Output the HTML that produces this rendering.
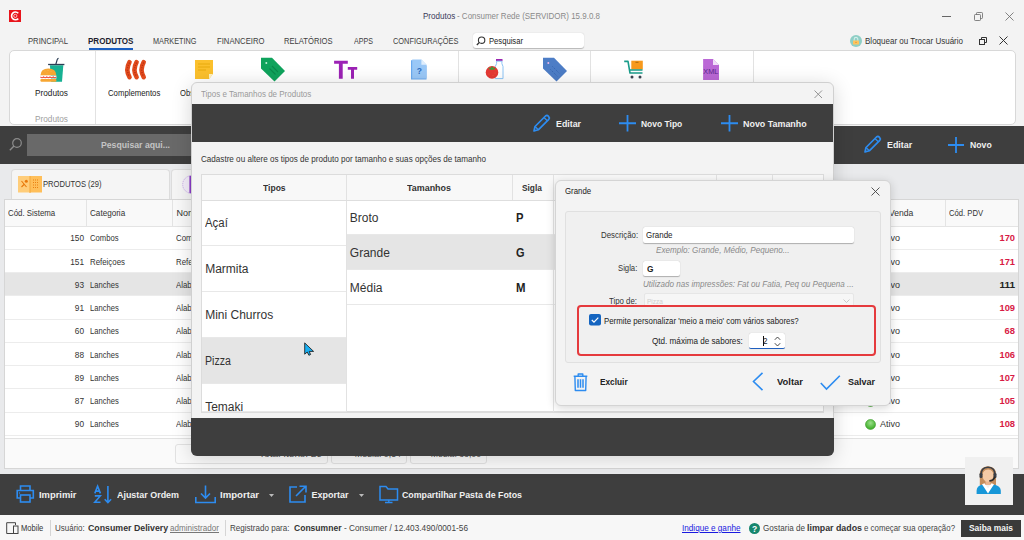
<!DOCTYPE html>
<html><head><meta charset="utf-8"><title>Produtos</title>
<style>
html,body{margin:0;padding:0;}
body{width:1024px;height:540px;overflow:hidden;position:relative;background:#f3f3f3;font-family:"Liberation Sans", sans-serif;}
svg{overflow:visible}
</style></head><body>
<div style="position:absolute;left:0px;top:0px;width:1024px;height:540px;background:#f3f3f3"></div>
<svg style="position:absolute;left:9px;top:9.8px;" width="12" height="12" viewBox="0 0 12 12"><rect width="12" height="12" fill="#e8141b"/><path d="M9.3 3.2A3.9 3.9 0 1 0 9.3 8.6" fill="none" stroke="#fff" stroke-width="1.6"/><circle cx="6.3" cy="5.9" r="1.6" fill="none" stroke="#ffc8c8" stroke-width="0.9"/></svg>
<div style="position:absolute;top:10.75px;font-size:9px;line-height:10.35px;font-weight:400;color:#3a3a5a;white-space:pre;left:422.60px;transform-origin:0 0;transform:scaleX(0.8937);">Produtos</div>
<div style="position:absolute;top:10.75px;font-size:9px;line-height:10.35px;font-weight:400;color:#8a8a8a;white-space:pre;left:457.00px;transform-origin:0 0;transform:scaleX(0.8860);">- Consumer Rede (SERVIDOR) 15.9.0.8</div>
<div style="position:absolute;left:942px;top:16px;width:9px;height:0.8px;background:#666"></div>
<svg style="position:absolute;left:974px;top:12px;" width="9" height="9" viewBox="0 0 9 9"><rect x="0.5" y="2.5" width="6" height="6" rx="0.8" fill="none" stroke="#666" stroke-width="0.8"/><path d="M2.5 2.5V1.3Q2.5 0.5 3.3 0.5H7.7Q8.5 0.5 8.5 1.3V5.7Q8.5 6.5 7.7 6.5H6.5" fill="none" stroke="#666" stroke-width="0.8"/></svg>
<svg style="position:absolute;left:1005px;top:12px;" width="9" height="9" viewBox="0 0 9 9"><path d="M0.5 0.5L8.5 8.5M8.5 0.5L0.5 8.5" stroke="#666" stroke-width="0.8"/></svg>
<div style="position:absolute;top:35.55px;font-size:9px;line-height:10.35px;font-weight:400;color:#404040;white-space:pre;left:27.50px;transform-origin:0 0;transform:scaleX(0.8536);">PRINCIPAL</div>
<div style="position:absolute;top:35.55px;font-size:9px;line-height:10.35px;font-weight:700;color:#1e1e2e;white-space:pre;left:88.00px;transform-origin:0 0;transform:scaleX(0.8949);">PRODUTOS</div>
<div style="position:absolute;left:88.5px;top:48px;width:44.5px;height:2px;background:#1b5fc1"></div>
<div style="position:absolute;top:35.55px;font-size:9px;line-height:10.35px;font-weight:400;color:#404040;white-space:pre;left:152.50px;transform-origin:0 0;transform:scaleX(0.8128);">MARKETING</div>
<div style="position:absolute;top:35.55px;font-size:9px;line-height:10.35px;font-weight:400;color:#404040;white-space:pre;left:216.50px;transform-origin:0 0;transform:scaleX(0.8556);">FINANCEIRO</div>
<div style="position:absolute;top:35.55px;font-size:9px;line-height:10.35px;font-weight:400;color:#404040;white-space:pre;left:284.00px;transform-origin:0 0;transform:scaleX(0.8455);">RELATÓRIOS</div>
<div style="position:absolute;top:35.55px;font-size:9px;line-height:10.35px;font-weight:400;color:#404040;white-space:pre;left:353.50px;transform-origin:0 0;transform:scaleX(0.7912);">APPS</div>
<div style="position:absolute;top:35.55px;font-size:9px;line-height:10.35px;font-weight:400;color:#404040;white-space:pre;left:392.50px;transform-origin:0 0;transform:scaleX(0.8237);">CONFIGURAÇÕES</div>
<div style="position:absolute;left:472.5px;top:32.5px;width:111px;height:15px;background:#fff;border-radius:3px;box-shadow:0 0.5px 1px rgba(0,0,0,0.25)"></div>
<svg style="position:absolute;left:476px;top:35.5px;" width="10" height="10" viewBox="0 0 10 10"><circle cx="5.6" cy="4.2" r="3.2" fill="none" stroke="#333" stroke-width="1.1"/><path d="M3.3 6.5L0.8 9" stroke="#333" stroke-width="1.2"/></svg>
<div style="position:absolute;top:35.55px;font-size:9px;line-height:10.35px;font-weight:400;color:#222;white-space:pre;left:489.00px;transform-origin:0 0;transform:scaleX(0.8493);">Pesquisar</div>
<svg style="position:absolute;left:850px;top:34.5px;" width="12" height="12" viewBox="0 0 12 12"><circle cx="6" cy="6" r="6" fill="#8ecfc6"/><path d="M4.2 5.8V4.2a1.8 1.8 0 0 1 3.6 0V5.8" fill="none" stroke="#d4eeea" stroke-width="1.1"/><rect x="3" y="5.6" width="6" height="3.8" rx="0.5" fill="#ffc45e"/><rect x="5.2" y="6.9" width="1.6" height="0.9" fill="#d8993a"/></svg>
<div style="position:absolute;top:35.55px;font-size:9px;line-height:10.35px;font-weight:400;color:#333;white-space:pre;left:865.00px;transform-origin:0 0;transform:scaleX(0.8904);">Bloquear ou Trocar Usuário</div>
<svg style="position:absolute;left:979px;top:37px;" width="8" height="8" viewBox="0 0 8 8"><rect x="0.5" y="2.5" width="5" height="5" fill="none" stroke="#333" stroke-width="1"/><path d="M2.5 2.5V0.5H7.5V5.5H5.5" fill="none" stroke="#333" stroke-width="1"/></svg>
<svg style="position:absolute;left:999px;top:36px;" width="9" height="9" viewBox="0 0 9 9"><path d="M0.5 0.5L8.5 8.5M8.5 0.5L0.5 8.5" stroke="#333" stroke-width="1"/></svg>
<div style="position:absolute;left:9px;top:50px;width:1007px;height:75px;background:#fff;border:1px solid #d8d8d8;border-radius:5px;box-sizing:border-box"></div>
<div style="position:absolute;left:95px;top:51px;width:1px;height:73px;background:#e2e2e2"></div>
<div style="position:absolute;left:457.5px;top:51px;width:1px;height:32px;background:#e2e2e2"></div>
<div style="position:absolute;left:590px;top:51px;width:1px;height:32px;background:#e2e2e2"></div>
<div style="position:absolute;left:753px;top:51px;width:1px;height:32px;background:#e2e2e2"></div>
<svg style="position:absolute;left:36px;top:54px;" width="34" height="32" viewBox="0 0 34 32">
<path d="M13.9 11.2L15.2 27.8H26L27.3 11.2Z" fill="#17b193"/>
<path d="M12.1 10.5H28.4" stroke="#2c3e55" stroke-width="1.3"/>
<path d="M19.8 10.5L21.2 5.6Q21.6 4.5 22.6 4.4" fill="none" stroke="#2c3e55" stroke-width="1.2"/>
<path d="M4.4 21.6Q4.6 14.5 12.4 14.5Q20.2 14.5 20.4 21.6Z" fill="#f7a632"/>
<rect x="4.4" y="21.6" width="16" height="3" fill="#fff"/>
<path d="M4.4 22.8Q6 24.4 7.6 22.8Q9.2 24.4 10.8 22.8Q12.4 24.4 14 22.8Q15.6 24.4 17.2 22.8Q18.8 24.4 20.4 22.8" stroke="#ee5a4a" stroke-width="1.1" fill="none"/>
<rect x="4.4" y="24.9" width="16" height="2.9" rx="1.2" fill="#f7a632"/>
<g fill="#ffd59a"><circle cx="9" cy="17" r="0.35"/><circle cx="12" cy="16.3" r="0.35"/><circle cx="15" cy="17.5" r="0.35"/><circle cx="11" cy="19" r="0.35"/></g></svg>
<div style="position:absolute;top:87.85px;font-size:9px;line-height:10.35px;font-weight:400;color:#222;white-space:pre;left:35.00px;transform-origin:0 0;transform:scaleX(0.9159);">Produtos</div>
<div style="position:absolute;top:114.25px;font-size:9px;line-height:10.35px;font-weight:400;color:#a0a0a0;white-space:pre;left:35.00px;transform-origin:0 0;transform:scaleX(0.9159);">Produtos</div>
<svg style="position:absolute;left:118.5px;top:54px;" width="34" height="32" viewBox="0 0 34 32">
<g fill="none" stroke="#e04a1c" stroke-width="4.6" stroke-linecap="round">
<path d="M10.5 8.2Q6.2 15.8 10.5 23.2"/><path d="M17.6 8.2Q13.3 15.8 17.6 23.2"/><path d="M24.7 8.2Q20.4 15.8 24.7 23.2"/></g>
<g fill="none" stroke="#b52a10" stroke-width="1.3" stroke-dasharray="0.9 1.6">
<path d="M10.5 8.6Q6.4 15.8 10.5 22.8"/><path d="M17.6 8.6Q13.5 15.8 17.6 22.8"/><path d="M24.7 8.6Q20.6 15.8 24.7 22.8"/></g></svg>
<div style="position:absolute;top:87.85px;font-size:9px;line-height:10.35px;font-weight:400;color:#222;white-space:pre;left:108.40px;transform-origin:0 0;transform:scaleX(0.8640);">Complementos</div>
<svg style="position:absolute;left:195px;top:60px;" width="18" height="19" viewBox="0 0 18 19"><path d="M0 0H18V14L14 19H0Z" fill="#fbc02d"/><path d="M14 19V14H18Z" fill="#fff3c0"/><g stroke="#e0a000" stroke-width="0.7"><path d="M3 4h12M3 7h12M3 10h8"/></g></svg>
<div style="position:absolute;top:87.85px;font-size:9px;line-height:10.35px;font-weight:400;color:#222;white-space:pre;left:179.50px;transform-origin:0 0;transform:scaleX(0.8477);">Obs</div>
<svg style="position:absolute;left:256px;top:54px;" width="34" height="32" viewBox="0 0 34 32"><path d="M5 3.7H16L29 17L18.5 27.5L5 14.5Z" fill="#0fa35c"/><circle cx="10.3" cy="9" r="1" fill="#bff0d6"/><path d="M13.5 14.5L19.5 20.5M16 12L22 18" stroke="#0a8a4c" stroke-width="1.1"/></svg>
<svg style="position:absolute;left:330px;top:54px;" width="34" height="32" viewBox="0 0 34 32"><path d="M4.1 6.8H17.8V9.8H12.7V24.7H8.9V9.8H4.1Z" fill="#9c22b5"/><path d="M17.8 13H27.2V15.7H24V24.7H21V15.7H17.8Z" fill="#9c22b5"/></svg>
<svg style="position:absolute;left:405px;top:54px;" width="34" height="32" viewBox="0 0 34 32"><path d="M6 6.3H16L21.5 11.8V25.6H6Z" fill="#6aaaf0"/><path d="M7.2 5.6H16.4L21.5 10.7V24.6H7.2Z" fill="#9ac8f7"/><path d="M16.4 5.6V10.7H21.5Z" fill="#e0eefc"/><text x="14.3" y="19.5" font-size="8.5" font-family="Liberation Sans" font-weight="700" fill="#2d6cc0" text-anchor="middle">?</text></svg>
<svg style="position:absolute;left:480px;top:54px;" width="34" height="32" viewBox="0 0 34 32"><rect x="16" y="5" width="6.5" height="2.2" fill="#9c27b0"/><path d="M16.6 7.2H21.9V9.6L23 12.5V24.6H15.3V12.5L16.6 9.6Z" fill="#fff" stroke="#8cc4f5" stroke-width="1"/><circle cx="12" cy="18.4" r="6.3" fill="#e53935"/><path d="M8 13.5L10.5 14.3L12 12L13.5 14.3L16 13.5L14 15.8H10Z" fill="#3f9e3a"/><g fill="#f7b24a"><circle cx="9" cy="20" r="0.35"/><circle cx="13" cy="21.5" r="0.35"/><circle cx="15" cy="19" r="0.35"/></g></svg>
<svg style="position:absolute;left:538px;top:54px;" width="34" height="32" viewBox="0 0 34 32"><path d="M5 3.7H16L29 17L18.5 27.5L5 14.5Z" fill="#4d7dc6"/><circle cx="10.3" cy="9" r="1" fill="#f0b8e8"/><path d="M14.5 12.5L21.5 19.5M12.5 15.5L19.5 22.5" stroke="#2a5aa8" stroke-width="0.8" stroke-dasharray="1 1.4"/></svg>
<svg style="position:absolute;left:618px;top:54px;" width="34" height="32" viewBox="0 0 34 32"><rect x="13.3" y="6.7" width="11.5" height="8.8" fill="#f7991c"/><path d="M17.5 8.3H20.5" stroke="#8a5200" stroke-width="0.7"/><path d="M6.2 7.4H10L12 19H24.5" fill="none" stroke="#1a9c8a" stroke-width="1.6" stroke-linejoin="round"/><path d="M11.5 16H24.5" stroke="#1a9c8a" stroke-width="1.5"/><circle cx="14" cy="23" r="1.5" fill="#3b4552"/><circle cx="22" cy="23" r="1.5" fill="#3b4552"/></svg>
<svg style="position:absolute;left:700px;top:54px;" width="34" height="32" viewBox="0 0 34 32"><path d="M3.1 5H13L19 11V25.9H3.1Z" fill="#bb68d6"/><path d="M13 5V11H19Z" fill="#f0def8"/><text x="10.8" y="20" font-size="6.6" font-family="Liberation Sans" fill="#5a2a8a" text-anchor="middle" textLength="15" lengthAdjust="spacingAndGlyphs">XML</text></svg>
<div style="position:absolute;left:0px;top:126px;width:1024px;height:37.5px;background:#3e3e3e"></div>
<svg style="position:absolute;left:8.5px;top:138px;" width="13" height="13" viewBox="0 0 13 13"><circle cx="8" cy="5" r="4.3" fill="none" stroke="#8c8c8c" stroke-width="1.2"/><path d="M5 8L0.8 12.2" stroke="#8c8c8c" stroke-width="1.4"/></svg>
<div style="position:absolute;left:27px;top:134px;width:180px;height:21.5px;background:#696969"></div>
<div style="position:absolute;top:140.05px;font-size:9px;line-height:10.35px;font-weight:700;color:#c4c4c4;white-space:pre;left:101.00px;transform-origin:0 0;transform:scaleX(0.9646);">Pesquisar aqui...</div>
<svg style="position:absolute;left:863px;top:134.5px;" width="19" height="19" viewBox="0 0 19 19"><path d="M2 17L3 12.5L13.5 2Q15 0.8 16.5 2.3Q18 3.8 16.8 5.3L6.3 15.8Z" fill="none" stroke="#2d8cf0" stroke-width="1.7" stroke-linejoin="round"/><path d="M12 3.5L15.3 6.8M3 12.5L6.3 15.8" stroke="#2d8cf0" stroke-width="1.3"/></svg>
<div style="position:absolute;top:140.25px;font-size:9px;line-height:10.35px;font-weight:700;color:#f0f0f0;white-space:pre;left:886.70px;transform-origin:0 0;transform:scaleX(0.9876);">Editar</div>
<svg style="position:absolute;left:948px;top:137px;" width="16" height="16" viewBox="0 0 16 16"><path d="M8 0V16M0 8H16" stroke="#2d8cf0" stroke-width="1.8"/></svg>
<div style="position:absolute;top:140.25px;font-size:9px;line-height:10.35px;font-weight:700;color:#f0f0f0;white-space:pre;left:969.60px;transform-origin:0 0;transform:scaleX(0.9644);">Novo</div>
<div style="position:absolute;left:0px;top:163.5px;width:1024px;height:311px;background:#e9eaec"></div>
<div style="position:absolute;left:11px;top:168.8px;width:159px;height:31.5px;background:#f5f5f5;border:1px solid #dcdcdc;border-bottom:none;border-radius:4px 4px 0 0;box-sizing:border-box"></div>
<div style="position:absolute;left:171px;top:168.8px;width:60px;height:31.5px;background:#f5f5f5;border:1px solid #dcdcdc;border-bottom:none;border-radius:4px 4px 0 0;box-sizing:border-box"></div>
<svg style="position:absolute;left:18px;top:175.5px;" width="24" height="17" viewBox="0 0 24 17"><rect x="0" y="0" width="12" height="16.5" fill="#ffcd7a"/><rect x="12" y="0" width="12" height="16.5" fill="#ffbf5a"/><path d="M3.5 5L8.5 11M3.5 11L6 8.5" stroke="#e8780a" stroke-width="1.1"/><circle cx="8.3" cy="5.3" r="1.5" fill="#e8780a"/><g stroke="#e8780a" stroke-width="0.9" stroke-dasharray="1 1"><path d="M15 4h6M15 6.5h6M15 9h6M15 11.5h6"/></g><rect x="11.5" y="0" width="1" height="17" fill="#f4a83a"/></svg>
<div style="position:absolute;top:179.05px;font-size:9px;line-height:10.35px;font-weight:400;color:#333;white-space:pre;left:43.40px;transform-origin:0 0;transform:scaleX(0.8449);">PRODUTOS (29)</div>
<svg style="position:absolute;left:179.5px;top:175px;" width="24" height="19" viewBox="0 0 24 19"><circle cx="11.5" cy="9.5" r="8.8" fill="#f4eefa" stroke="#c6a8e6" stroke-width="0.9" stroke-dasharray="1.2 0.8"/><path d="M10.5 0.8V18.2" stroke="#8a3cc8" stroke-width="2.2"/></svg>
<div style="position:absolute;left:4px;top:199px;width:1015px;height:270px;background:#fafafa;border:1px solid #d6d6d6;box-sizing:border-box"></div>
<div style="position:absolute;left:5px;top:200px;width:1013px;height:26.6px;background:#f9f9f9;border-bottom:1px solid #e4e4e4;box-sizing:border-box"></div>
<div style="position:absolute;left:86px;top:200px;width:1px;height:26px;background:#e4e4e4"></div>
<div style="position:absolute;left:172px;top:200px;width:1px;height:26px;background:#e4e4e4"></div>
<div style="position:absolute;left:945px;top:200px;width:1px;height:26px;background:#e4e4e4"></div>
<div style="position:absolute;top:208.05px;font-size:9px;line-height:10.35px;font-weight:400;color:#333;white-space:pre;left:7.80px;transform-origin:0 0;transform:scaleX(0.8736);">Cód. Sistema</div>
<div style="position:absolute;top:208.05px;font-size:9px;line-height:10.35px;font-weight:400;color:#333;white-space:pre;left:90.20px;transform-origin:0 0;transform:scaleX(0.9018);">Categoria</div>
<div style="position:absolute;top:208.05px;font-size:9px;line-height:10.35px;font-weight:400;color:#333;white-space:pre;left:176.40px;transform-origin:0 0;">Nome</div>
<div style="position:absolute;top:208.05px;font-size:9px;line-height:10.35px;font-weight:400;color:#333;white-space:pre;left:867.00px;transform-origin:0 0;transform:scaleX(0.9537);">Disp. Venda</div>
<div style="position:absolute;top:208.05px;font-size:9px;line-height:10.35px;font-weight:400;color:#333;white-space:pre;left:948.90px;transform-origin:0 0;transform:scaleX(0.8518);">Cód. PDV</div>
<div style="position:absolute;left:5px;top:226.5px;width:1013px;height:23.3px;background:#ffffff;border-bottom:1px solid #ececec;box-sizing:border-box"></div>
<div style="position:absolute;top:233.35px;font-size:9px;line-height:10.35px;font-weight:400;color:#333;white-space:pre;left:68.57px;transform-origin:100% 0;transform:scaleX(0.9181);">150</div>
<div style="position:absolute;top:233.35px;font-size:9px;line-height:10.35px;font-weight:400;color:#333;white-space:pre;left:89.50px;transform-origin:0 0;transform:scaleX(0.8503);">Combos</div>
<div style="position:absolute;top:233.35px;font-size:9px;line-height:10.35px;font-weight:400;color:#333;white-space:pre;left:176.40px;transform-origin:0 0;transform:scaleX(0.8700);">Combo</div>
<svg style="position:absolute;left:865.3px;top:233.0px;" width="11" height="11" viewBox="0 0 11 11"><defs><radialGradient id="g0" cx="0.5" cy="0.35" r="0.6"><stop offset="0" stop-color="#9be08a"/><stop offset="1" stop-color="#3fae2a"/></radialGradient></defs><circle cx="5.5" cy="5.5" r="5" fill="url(#g0)" stroke="#3a9a2a" stroke-width="0.6"/></svg>
<div style="position:absolute;top:233.35px;font-size:9px;line-height:10.35px;font-weight:400;color:#333;white-space:pre;left:880.00px;transform-origin:0 0;">Ativo</div>
<div style="position:absolute;top:233.35px;font-size:9px;line-height:10.35px;font-weight:700;color:#d81b45;white-space:pre;left:1000.47px;transform-origin:100% 0;transform:scaleX(1.0378);">170</div>
<div style="position:absolute;left:5px;top:249.75px;width:1013px;height:23.3px;background:#ffffff;border-bottom:1px solid #ececec;box-sizing:border-box"></div>
<div style="position:absolute;top:256.60px;font-size:9px;line-height:10.35px;font-weight:400;color:#333;white-space:pre;left:68.57px;transform-origin:100% 0;transform:scaleX(0.9181);">151</div>
<div style="position:absolute;top:256.60px;font-size:9px;line-height:10.35px;font-weight:400;color:#333;white-space:pre;left:89.50px;transform-origin:0 0;transform:scaleX(0.8743);">Refeiçoes</div>
<div style="position:absolute;top:256.60px;font-size:9px;line-height:10.35px;font-weight:400;color:#333;white-space:pre;left:176.40px;transform-origin:0 0;transform:scaleX(0.8700);">Refeição</div>
<svg style="position:absolute;left:865.3px;top:256.25px;" width="11" height="11" viewBox="0 0 11 11"><defs><radialGradient id="g1" cx="0.5" cy="0.35" r="0.6"><stop offset="0" stop-color="#9be08a"/><stop offset="1" stop-color="#3fae2a"/></radialGradient></defs><circle cx="5.5" cy="5.5" r="5" fill="url(#g1)" stroke="#3a9a2a" stroke-width="0.6"/></svg>
<div style="position:absolute;top:256.60px;font-size:9px;line-height:10.35px;font-weight:400;color:#333;white-space:pre;left:880.00px;transform-origin:0 0;">Ativo</div>
<div style="position:absolute;top:256.60px;font-size:9px;line-height:10.35px;font-weight:700;color:#d81b45;white-space:pre;left:1000.47px;transform-origin:100% 0;transform:scaleX(1.0378);">171</div>
<div style="position:absolute;left:5px;top:273.0px;width:1013px;height:23.3px;background:#e5e5e5;border-bottom:1px solid #ececec;box-sizing:border-box"></div>
<div style="position:absolute;top:279.85px;font-size:9px;line-height:10.35px;font-weight:400;color:#333;white-space:pre;left:73.58px;transform-origin:100% 0;transform:scaleX(0.9186);">93</div>
<div style="position:absolute;top:279.85px;font-size:9px;line-height:10.35px;font-weight:400;color:#333;white-space:pre;left:89.50px;transform-origin:0 0;transform:scaleX(0.8463);">Lanches</div>
<div style="position:absolute;top:279.85px;font-size:9px;line-height:10.35px;font-weight:400;color:#333;white-space:pre;left:176.40px;transform-origin:0 0;transform:scaleX(0.8700);">Alabama</div>
<svg style="position:absolute;left:865.3px;top:279.5px;" width="11" height="11" viewBox="0 0 11 11"><defs><radialGradient id="g2" cx="0.5" cy="0.35" r="0.6"><stop offset="0" stop-color="#9be08a"/><stop offset="1" stop-color="#3fae2a"/></radialGradient></defs><circle cx="5.5" cy="5.5" r="5" fill="url(#g2)" stroke="#3a9a2a" stroke-width="0.6"/></svg>
<div style="position:absolute;top:279.85px;font-size:9px;line-height:10.35px;font-weight:400;color:#333;white-space:pre;left:880.00px;transform-origin:0 0;">Ativo</div>
<div style="position:absolute;top:279.85px;font-size:9px;line-height:10.35px;font-weight:700;color:#222;white-space:pre;left:1001.47px;transform-origin:100% 0;transform:scaleX(1.1118);">111</div>
<div style="position:absolute;left:5px;top:296.25px;width:1013px;height:23.3px;background:#ffffff;border-bottom:1px solid #ececec;box-sizing:border-box"></div>
<div style="position:absolute;top:303.10px;font-size:9px;line-height:10.35px;font-weight:400;color:#333;white-space:pre;left:73.58px;transform-origin:100% 0;transform:scaleX(0.9186);">91</div>
<div style="position:absolute;top:303.10px;font-size:9px;line-height:10.35px;font-weight:400;color:#333;white-space:pre;left:89.50px;transform-origin:0 0;transform:scaleX(0.8463);">Lanches</div>
<div style="position:absolute;top:303.10px;font-size:9px;line-height:10.35px;font-weight:400;color:#333;white-space:pre;left:176.40px;transform-origin:0 0;transform:scaleX(0.8700);">Alabama</div>
<svg style="position:absolute;left:865.3px;top:302.75px;" width="11" height="11" viewBox="0 0 11 11"><defs><radialGradient id="g3" cx="0.5" cy="0.35" r="0.6"><stop offset="0" stop-color="#9be08a"/><stop offset="1" stop-color="#3fae2a"/></radialGradient></defs><circle cx="5.5" cy="5.5" r="5" fill="url(#g3)" stroke="#3a9a2a" stroke-width="0.6"/></svg>
<div style="position:absolute;top:303.10px;font-size:9px;line-height:10.35px;font-weight:400;color:#333;white-space:pre;left:880.00px;transform-origin:0 0;">Ativo</div>
<div style="position:absolute;top:303.10px;font-size:9px;line-height:10.35px;font-weight:700;color:#d81b45;white-space:pre;left:1000.47px;transform-origin:100% 0;transform:scaleX(1.0378);">109</div>
<div style="position:absolute;left:5px;top:319.5px;width:1013px;height:23.3px;background:#ffffff;border-bottom:1px solid #ececec;box-sizing:border-box"></div>
<div style="position:absolute;top:326.35px;font-size:9px;line-height:10.35px;font-weight:400;color:#333;white-space:pre;left:73.58px;transform-origin:100% 0;transform:scaleX(0.9186);">60</div>
<div style="position:absolute;top:326.35px;font-size:9px;line-height:10.35px;font-weight:400;color:#333;white-space:pre;left:89.50px;transform-origin:0 0;transform:scaleX(0.8463);">Lanches</div>
<div style="position:absolute;top:326.35px;font-size:9px;line-height:10.35px;font-weight:400;color:#333;white-space:pre;left:176.40px;transform-origin:0 0;transform:scaleX(0.8700);">Alabama</div>
<svg style="position:absolute;left:865.3px;top:326.0px;" width="11" height="11" viewBox="0 0 11 11"><defs><radialGradient id="g4" cx="0.5" cy="0.35" r="0.6"><stop offset="0" stop-color="#9be08a"/><stop offset="1" stop-color="#3fae2a"/></radialGradient></defs><circle cx="5.5" cy="5.5" r="5" fill="url(#g4)" stroke="#3a9a2a" stroke-width="0.6"/></svg>
<div style="position:absolute;top:326.35px;font-size:9px;line-height:10.35px;font-weight:400;color:#333;white-space:pre;left:880.00px;transform-origin:0 0;">Ativo</div>
<div style="position:absolute;top:326.35px;font-size:9px;line-height:10.35px;font-weight:700;color:#d81b45;white-space:pre;left:1005.48px;transform-origin:100% 0;transform:scaleX(1.0384);">68</div>
<div style="position:absolute;left:5px;top:342.75px;width:1013px;height:23.3px;background:#ffffff;border-bottom:1px solid #ececec;box-sizing:border-box"></div>
<div style="position:absolute;top:349.60px;font-size:9px;line-height:10.35px;font-weight:400;color:#333;white-space:pre;left:73.58px;transform-origin:100% 0;transform:scaleX(0.9186);">88</div>
<div style="position:absolute;top:349.60px;font-size:9px;line-height:10.35px;font-weight:400;color:#333;white-space:pre;left:89.50px;transform-origin:0 0;transform:scaleX(0.8463);">Lanches</div>
<div style="position:absolute;top:349.60px;font-size:9px;line-height:10.35px;font-weight:400;color:#333;white-space:pre;left:176.40px;transform-origin:0 0;transform:scaleX(0.8700);">Alabama</div>
<svg style="position:absolute;left:865.3px;top:349.25px;" width="11" height="11" viewBox="0 0 11 11"><defs><radialGradient id="g5" cx="0.5" cy="0.35" r="0.6"><stop offset="0" stop-color="#9be08a"/><stop offset="1" stop-color="#3fae2a"/></radialGradient></defs><circle cx="5.5" cy="5.5" r="5" fill="url(#g5)" stroke="#3a9a2a" stroke-width="0.6"/></svg>
<div style="position:absolute;top:349.60px;font-size:9px;line-height:10.35px;font-weight:400;color:#333;white-space:pre;left:880.00px;transform-origin:0 0;">Ativo</div>
<div style="position:absolute;top:349.60px;font-size:9px;line-height:10.35px;font-weight:700;color:#d81b45;white-space:pre;left:1000.47px;transform-origin:100% 0;transform:scaleX(1.0378);">106</div>
<div style="position:absolute;left:5px;top:366.0px;width:1013px;height:23.3px;background:#ffffff;border-bottom:1px solid #ececec;box-sizing:border-box"></div>
<div style="position:absolute;top:372.85px;font-size:9px;line-height:10.35px;font-weight:400;color:#333;white-space:pre;left:73.58px;transform-origin:100% 0;transform:scaleX(0.9186);">89</div>
<div style="position:absolute;top:372.85px;font-size:9px;line-height:10.35px;font-weight:400;color:#333;white-space:pre;left:89.50px;transform-origin:0 0;transform:scaleX(0.8463);">Lanches</div>
<div style="position:absolute;top:372.85px;font-size:9px;line-height:10.35px;font-weight:400;color:#333;white-space:pre;left:176.40px;transform-origin:0 0;transform:scaleX(0.8700);">Alabama</div>
<svg style="position:absolute;left:865.3px;top:372.5px;" width="11" height="11" viewBox="0 0 11 11"><defs><radialGradient id="g6" cx="0.5" cy="0.35" r="0.6"><stop offset="0" stop-color="#9be08a"/><stop offset="1" stop-color="#3fae2a"/></radialGradient></defs><circle cx="5.5" cy="5.5" r="5" fill="url(#g6)" stroke="#3a9a2a" stroke-width="0.6"/></svg>
<div style="position:absolute;top:372.85px;font-size:9px;line-height:10.35px;font-weight:400;color:#333;white-space:pre;left:880.00px;transform-origin:0 0;">Ativo</div>
<div style="position:absolute;top:372.85px;font-size:9px;line-height:10.35px;font-weight:700;color:#d81b45;white-space:pre;left:1000.47px;transform-origin:100% 0;transform:scaleX(1.0378);">107</div>
<div style="position:absolute;left:5px;top:389.25px;width:1013px;height:23.3px;background:#ffffff;border-bottom:1px solid #ececec;box-sizing:border-box"></div>
<div style="position:absolute;top:396.10px;font-size:9px;line-height:10.35px;font-weight:400;color:#333;white-space:pre;left:73.58px;transform-origin:100% 0;transform:scaleX(0.9186);">87</div>
<div style="position:absolute;top:396.10px;font-size:9px;line-height:10.35px;font-weight:400;color:#333;white-space:pre;left:89.50px;transform-origin:0 0;transform:scaleX(0.8463);">Lanches</div>
<div style="position:absolute;top:396.10px;font-size:9px;line-height:10.35px;font-weight:400;color:#333;white-space:pre;left:176.40px;transform-origin:0 0;transform:scaleX(0.8700);">Alabama</div>
<svg style="position:absolute;left:865.3px;top:395.75px;" width="11" height="11" viewBox="0 0 11 11"><defs><radialGradient id="g7" cx="0.5" cy="0.35" r="0.6"><stop offset="0" stop-color="#9be08a"/><stop offset="1" stop-color="#3fae2a"/></radialGradient></defs><circle cx="5.5" cy="5.5" r="5" fill="url(#g7)" stroke="#3a9a2a" stroke-width="0.6"/></svg>
<div style="position:absolute;top:396.10px;font-size:9px;line-height:10.35px;font-weight:400;color:#333;white-space:pre;left:880.00px;transform-origin:0 0;">Ativo</div>
<div style="position:absolute;top:396.10px;font-size:9px;line-height:10.35px;font-weight:700;color:#d81b45;white-space:pre;left:1000.47px;transform-origin:100% 0;transform:scaleX(1.0378);">105</div>
<div style="position:absolute;left:5px;top:412.5px;width:1013px;height:23.3px;background:#ffffff;border-bottom:1px solid #ececec;box-sizing:border-box"></div>
<div style="position:absolute;top:419.35px;font-size:9px;line-height:10.35px;font-weight:400;color:#333;white-space:pre;left:73.58px;transform-origin:100% 0;transform:scaleX(0.9186);">90</div>
<div style="position:absolute;top:419.35px;font-size:9px;line-height:10.35px;font-weight:400;color:#333;white-space:pre;left:89.50px;transform-origin:0 0;transform:scaleX(0.8463);">Lanches</div>
<div style="position:absolute;top:419.35px;font-size:9px;line-height:10.35px;font-weight:400;color:#333;white-space:pre;left:176.40px;transform-origin:0 0;transform:scaleX(0.8700);">Alabama</div>
<svg style="position:absolute;left:865.3px;top:419.0px;" width="11" height="11" viewBox="0 0 11 11"><defs><radialGradient id="g8" cx="0.5" cy="0.35" r="0.6"><stop offset="0" stop-color="#9be08a"/><stop offset="1" stop-color="#3fae2a"/></radialGradient></defs><circle cx="5.5" cy="5.5" r="5" fill="url(#g8)" stroke="#3a9a2a" stroke-width="0.6"/></svg>
<div style="position:absolute;top:419.35px;font-size:9px;line-height:10.35px;font-weight:400;color:#333;white-space:pre;left:880.00px;transform-origin:0 0;">Ativo</div>
<div style="position:absolute;top:419.35px;font-size:9px;line-height:10.35px;font-weight:700;color:#d81b45;white-space:pre;left:1000.47px;transform-origin:100% 0;transform:scaleX(1.0378);">108</div>
<div style="position:absolute;left:5px;top:435.7px;width:1013px;height:3.3px;background:#fff;border-bottom:1px solid #e2e2e2;box-sizing:border-box"></div>
<div style="position:absolute;left:174.8px;top:444px;width:153.2px;height:19.8px;background:#fafafa;border:1px solid #e2e2e2;border-radius:3px;box-sizing:border-box"></div>
<div style="position:absolute;top:449.35px;font-size:9px;line-height:10.35px;font-weight:400;color:#555;white-space:pre;left:265.95px;transform-origin:100% 0;transform:scaleX(1.1241);">Total Itens: 29</div>
<div style="position:absolute;left:330.7px;top:444px;width:76.30000000000001px;height:19.8px;background:#fafafa;border:1px solid #e2e2e2;border-radius:3px;box-sizing:border-box"></div>
<div style="position:absolute;top:449.35px;font-size:9px;line-height:10.35px;font-weight:400;color:#555;white-space:pre;left:353.97px;transform-origin:100% 0;transform:scaleX(0.9823);">Média: 0,54</div>
<div style="position:absolute;left:410px;top:444px;width:77px;height:19.8px;background:#fafafa;border:1px solid #e2e2e2;border-radius:3px;box-sizing:border-box"></div>
<div style="position:absolute;top:449.35px;font-size:9px;line-height:10.35px;font-weight:400;color:#555;white-space:pre;left:428.95px;transform-origin:100% 0;transform:scaleX(0.9684);">Média: 33,00</div>
<div style="position:absolute;left:965px;top:457px;width:47.5px;height:47.5px;background:#f0f0f0"></div>
<div style="position:absolute;left:0px;top:474px;width:1024px;height:41px;background:#3e3e3e"></div>
<div style="position:absolute;left:965px;top:474px;width:47.5px;height:30.5px;background:#f0f0f0"></div>
<svg style="position:absolute;left:960px;top:452px;" width="60" height="58" viewBox="0 0 60 58"><path d="M19.8 33V22Q19.8 14.5 28 14.5Q36 14.5 36 22V33Z" fill="#c48d5c"/>
<rect x="25.5" y="27" width="5" height="6" fill="#e9b48f"/>
<ellipse cx="28" cy="23.5" rx="5.6" ry="6.3" fill="#f4caa6"/>
<path d="M22.2 22Q23 17.5 28.5 17.2Q33.5 17.5 34.2 22V18Q32.5 14.6 28 14.6Q23.5 14.6 22.2 18Z" fill="#c48d5c"/>
<path d="M16.6 42V38.5Q16.8 33.8 22 32.4L28 38L34 32.4Q40.6 33.8 40.8 38.5V42Z" fill="#1797d8"/>
<path d="M22 32.2L28 41.5L34 32.2L31.5 31.2L28 36.5L24.5 31.2Z" fill="#fff"/>
<path d="M21 24Q20.5 15.2 28 15.2Q35.5 15.2 35 24" fill="none" stroke="#3a3f47" stroke-width="1.6"/>
<rect x="19.5" y="21" width="3" height="5" rx="1.3" fill="#3a3f47"/><rect x="33.5" y="21" width="3" height="5" rx="1.3" fill="#3a3f47"/>
<path d="M34.5 25.5Q33.5 28.5 30 28.8" fill="none" stroke="#2a2a2a" stroke-width="1.8" stroke-linecap="round"/></svg>
<svg style="position:absolute;left:15.5px;top:485px;" width="18.5" height="18" viewBox="0 0 18.5 18"><g fill="none" stroke="#2d8cf0" stroke-width="1.6"><path d="M4.5 5V1H14V5"/><path d="M4.5 13H1.2V5.5H17.3V13H14"/><rect x="4.5" y="10" width="9.5" height="7"/></g><circle cx="3.5" cy="8" r="0.7" fill="#2d8cf0"/></svg>
<div style="position:absolute;top:490.05px;font-size:9px;line-height:10.35px;font-weight:700;color:#f0f0f0;white-space:pre;left:39.00px;transform-origin:0 0;transform:scaleX(1.0412);">Imprimir</div>
<svg style="position:absolute;left:94px;top:485px;" width="18" height="19" viewBox="0 0 18 19"><g fill="none" stroke="#2d8cf0" stroke-width="1.6"><path d="M0.8 8.4L3.6 1.2L6.4 8.4M1.7 6.1H5.5"/><path d="M0.8 10.9H6.3L0.8 17.3H6.5"/><path d="M13.9 1V17.5M10.7 14.2L13.9 17.5L17.1 14.2"/></g></svg>
<div style="position:absolute;top:490.05px;font-size:9px;line-height:10.35px;font-weight:700;color:#f0f0f0;white-space:pre;left:117.00px;transform-origin:0 0;transform:scaleX(0.9915);">Ajustar Ordem</div>
<svg style="position:absolute;left:195px;top:485px;" width="21" height="19" viewBox="0 0 21 19"><path d="M10.5 0.5V13M6 8.5L10.5 13L15 8.5" fill="none" stroke="#2d8cf0" stroke-width="1.6"/><path d="M0.8 12V17.5H20.2V12" fill="none" stroke="#2d8cf0" stroke-width="1.6"/></svg>
<div style="position:absolute;top:490.05px;font-size:9px;line-height:10.35px;font-weight:700;color:#f0f0f0;white-space:pre;left:220.00px;transform-origin:0 0;transform:scaleX(1.0680);">Importar</div>
<svg style="position:absolute;left:268.5px;top:493.5px;" width="5" height="3" viewBox="0 0 5 3"><path d="M0 0H5L2.5 3Z" fill="#bbb"/></svg>
<svg style="position:absolute;left:289px;top:485px;" width="18" height="18" viewBox="0 0 18 18"><path d="M8 2H1V17H16V10" fill="none" stroke="#2d8cf0" stroke-width="1.6"/><path d="M7 11L16.5 1.5M10.5 1.2H17V7.5" fill="none" stroke="#2d8cf0" stroke-width="1.6"/></svg>
<div style="position:absolute;top:490.05px;font-size:9px;line-height:10.35px;font-weight:700;color:#f0f0f0;white-space:pre;left:311.50px;transform-origin:0 0;">Exportar</div>
<svg style="position:absolute;left:359px;top:493.5px;" width="5" height="3" viewBox="0 0 5 3"><path d="M0 0H5L2.5 3Z" fill="#bbb"/></svg>
<svg style="position:absolute;left:378.5px;top:485px;" width="19.5" height="18" viewBox="0 0 19.5 18"><path d="M1 1.5H7L9 4H18.5V15H1Z" fill="none" stroke="#2d8cf0" stroke-width="1.5"/><path d="M6 17.5H13.5M9.8 15V17.5" stroke="#2d8cf0" stroke-width="1.3"/></svg>
<div style="position:absolute;top:490.05px;font-size:9px;line-height:10.35px;font-weight:700;color:#f0f0f0;white-space:pre;left:402.00px;transform-origin:0 0;transform:scaleX(0.9793);">Compartilhar Pasta de Fotos</div>
<div style="position:absolute;left:0px;top:515px;width:1024px;height:25px;background:#f7f7f7"></div>
<svg style="position:absolute;left:5.5px;top:522px;" width="12.5" height="12" viewBox="0 0 12.5 12"><path d="M8 11.5H0.7V0.7H9.5V3" fill="none" stroke="#444" stroke-width="1"/><rect x="7.5" y="4" width="4.5" height="7.5" fill="none" stroke="#444" stroke-width="1"/></svg>
<div style="position:absolute;top:523.05px;font-size:9px;line-height:10.35px;font-weight:400;color:#333;white-space:pre;left:21.30px;transform-origin:0 0;transform:scaleX(0.8410);">Mobile</div>
<div style="position:absolute;left:49.5px;top:520px;width:1px;height:16px;background:#d5d5d5"></div>
<div style="position:absolute;top:523.05px;font-size:9px;line-height:10.35px;font-weight:400;color:#444;white-space:pre;left:55.00px;transform-origin:0 0;transform:scaleX(0.8891);">Usuário:</div>
<div style="position:absolute;top:523.05px;font-size:9px;line-height:10.35px;font-weight:700;color:#333;white-space:pre;left:87.70px;transform-origin:0 0;transform:scaleX(0.9763);">Consumer Delivery</div>
<div style="position:absolute;top:523.05px;font-size:9px;line-height:10.35px;font-weight:400;color:#777;white-space:pre;text-decoration:underline;left:170.00px;transform-origin:0 0;transform:scaleX(0.8986);">administrador</div>
<div style="position:absolute;left:224.5px;top:520px;width:1px;height:16px;background:#d5d5d5"></div>
<div style="position:absolute;top:523.05px;font-size:9px;line-height:10.35px;font-weight:400;color:#444;white-space:pre;left:229.50px;transform-origin:0 0;transform:scaleX(0.8941);">Registrado para:</div>
<div style="position:absolute;top:523.05px;font-size:9px;line-height:10.35px;font-weight:700;color:#333;white-space:pre;left:293.50px;transform-origin:0 0;transform:scaleX(0.9497);">Consumner</div>
<div style="position:absolute;top:523.05px;font-size:9px;line-height:10.35px;font-weight:400;color:#444;white-space:pre;left:343.50px;transform-origin:0 0;transform:scaleX(0.9179);">- Consumer / 12.403.490/0001-56</div>
<div style="position:absolute;top:523.05px;font-size:9px;line-height:10.35px;font-weight:400;color:#1a1ae0;white-space:pre;text-decoration:underline;left:682.00px;transform-origin:0 0;transform:scaleX(0.9061);">Indique e ganhe</div>
<svg style="position:absolute;left:748.5px;top:522.5px;" width="11" height="11" viewBox="0 0 11 11"><circle cx="5.5" cy="5.5" r="5.5" fill="#16866e"/><text x="5.5" y="9" font-size="8.5" font-family="Liberation Sans" font-weight="700" fill="#fff" text-anchor="middle">?</text></svg>
<div style="position:absolute;top:523.05px;font-size:9px;line-height:10.35px;font-weight:400;color:#444;white-space:pre;left:763.00px;transform-origin:0 0;transform:scaleX(0.9026);">Gostaria de</div>
<div style="position:absolute;top:523.05px;font-size:9px;line-height:10.35px;font-weight:700;color:#333;white-space:pre;left:807.00px;transform-origin:0 0;transform:scaleX(0.9819);">limpar dados</div>
<div style="position:absolute;top:523.05px;font-size:9px;line-height:10.35px;font-weight:400;color:#444;white-space:pre;left:864.00px;transform-origin:0 0;transform:scaleX(0.8745);">e começar sua operação?</div>
<div style="position:absolute;left:960.5px;top:520px;width:60px;height:16.5px;background:#3a3a3a"></div>
<div style="position:absolute;top:523.05px;font-size:9px;line-height:10.35px;font-weight:700;color:#f5f5f5;white-space:pre;left:968.50px;transform-origin:0 0;transform:scaleX(0.9355);">Saiba mais</div>
<div style="position:absolute;left:191px;top:82px;width:642.5px;height:374.3px;background:#f3f3f3;border:1px solid #d0d0d0;border-radius:6px;box-sizing:border-box;box-shadow:0 3px 20px rgba(0,0,0,0.16)"></div>
<div style="position:absolute;top:88.55px;font-size:9px;line-height:10.35px;font-weight:400;color:#9a9a9a;white-space:pre;left:200.75px;transform-origin:0 0;transform:scaleX(0.8890);">Tipos e Tamanhos de Produtos</div>
<svg style="position:absolute;left:813.5px;top:89.5px;" width="8.5" height="8.5" viewBox="0 0 8.5 8.5"><path d="M0.5 0.5L8 8M8 0.5L0.5 8" stroke="#888" stroke-width="0.9"/></svg>
<div style="position:absolute;left:192px;top:104px;width:640.5px;height:38px;background:#3e3e3e"></div>
<svg style="position:absolute;left:532px;top:113.5px;" width="19.5" height="19" viewBox="0 0 19.5 19"><path d="M2 17L3 12.5L13.5 2Q15 0.8 16.5 2.3Q18 3.8 16.8 5.3L6.3 15.8Z" fill="none" stroke="#2d8cf0" stroke-width="1.7" stroke-linejoin="round"/><path d="M12 3.5L15.3 6.8M3 12.5L6.3 15.8" stroke="#2d8cf0" stroke-width="1.3"/></svg>
<div style="position:absolute;top:118.80px;font-size:9px;line-height:10.35px;font-weight:700;color:#f0f0f0;white-space:pre;left:556.00px;transform-origin:0 0;transform:scaleX(0.9798);">Editar</div>
<svg style="position:absolute;left:618.5px;top:115px;" width="17" height="16.5" viewBox="0 0 17 16.5"><path d="M8.5 0V16.5M0 8.25H17" stroke="#2d8cf0" stroke-width="1.8"/></svg>
<div style="position:absolute;top:118.80px;font-size:9px;line-height:10.35px;font-weight:700;color:#f0f0f0;white-space:pre;left:641.25px;transform-origin:0 0;transform:scaleX(0.9408);">Novo Tipo</div>
<svg style="position:absolute;left:720.5px;top:115px;" width="17" height="16.5" viewBox="0 0 17 16.5"><path d="M8.5 0V16.5M0 8.25H17" stroke="#2d8cf0" stroke-width="1.8"/></svg>
<div style="position:absolute;top:118.80px;font-size:9px;line-height:10.35px;font-weight:700;color:#f0f0f0;white-space:pre;left:742.80px;transform-origin:0 0;transform:scaleX(0.9900);">Novo Tamanho</div>
<div style="position:absolute;top:154.15px;font-size:9px;line-height:10.35px;font-weight:400;color:#333;white-space:pre;left:200.90px;transform-origin:0 0;transform:scaleX(0.9002);">Cadastre ou altere os tipos de produto por tamanho e suas opções de tamanho</div>
<div style="position:absolute;left:201px;top:173.8px;width:622.5px;height:238.7px;background:#fff;border:1px solid #dcdcdc;box-sizing:border-box"></div>
<div style="position:absolute;left:202px;top:174.8px;width:620.5px;height:26px;background:#f8f8f8;border-bottom:1px solid #dcdcdc;box-sizing:border-box"></div>
<div style="position:absolute;left:346px;top:174.8px;width:1px;height:25.5px;background:#e2e2e2"></div>
<div style="position:absolute;left:511.5px;top:174.8px;width:1px;height:25.5px;background:#e2e2e2"></div>
<div style="position:absolute;left:553.3px;top:174.8px;width:1px;height:25.5px;background:#e2e2e2"></div>
<div style="position:absolute;left:716px;top:174.8px;width:1px;height:25.5px;background:#e2e2e2"></div>
<div style="position:absolute;left:771.6px;top:174.8px;width:1px;height:25.5px;background:#e2e2e2"></div>
<div style="position:absolute;left:346px;top:200px;width:1px;height:212px;background:#e2e2e2"></div>
<div style="position:absolute;top:182.55px;font-size:9px;line-height:10.35px;font-weight:700;color:#333;white-space:pre;left:262.60px;transform-origin:0 0;transform:scaleX(0.9478);">Tipos</div>
<div style="position:absolute;top:182.55px;font-size:9px;line-height:10.35px;font-weight:700;color:#333;white-space:pre;left:406.60px;transform-origin:0 0;transform:scaleX(0.9922);">Tamanhos</div>
<div style="position:absolute;top:182.55px;font-size:9px;line-height:10.35px;font-weight:700;color:#333;white-space:pre;left:522.40px;transform-origin:0 0;transform:scaleX(0.9249);">Sigla</div>
<div style="position:absolute;left:202px;top:200.4px;width:144px;height:45.9px;background:#ffffff;border-bottom:1px solid #e8e8e8;box-sizing:border-box"></div>
<div style="position:absolute;top:217.10px;font-size:12px;line-height:13.80px;font-weight:400;color:#333;white-space:pre;left:205.20px;transform-origin:0 0;transform:scaleX(0.9500);">Açaí</div>
<div style="position:absolute;left:202px;top:246.3px;width:144px;height:45.9px;background:#ffffff;border-bottom:1px solid #e8e8e8;box-sizing:border-box"></div>
<div style="position:absolute;top:263.00px;font-size:12px;line-height:13.80px;font-weight:400;color:#333;white-space:pre;left:205.20px;transform-origin:0 0;">Marmita</div>
<div style="position:absolute;left:202px;top:292.2px;width:144px;height:45.9px;background:#ffffff;border-bottom:1px solid #e8e8e8;box-sizing:border-box"></div>
<div style="position:absolute;top:308.90px;font-size:12px;line-height:13.80px;font-weight:400;color:#333;white-space:pre;left:205.20px;transform-origin:0 0;">Mini Churros</div>
<div style="position:absolute;left:202px;top:338.1px;width:144px;height:45.9px;background:#e5e5e5;border-bottom:1px solid #e8e8e8;box-sizing:border-box"></div>
<div style="position:absolute;top:354.80px;font-size:12px;line-height:13.80px;font-weight:400;color:#333;white-space:pre;left:205.20px;transform-origin:0 0;transform:scaleX(0.8800);">Pizza</div>
<div style="position:absolute;left:202px;top:384.0px;width:144px;height:28.0px;background:#ffffff;border-bottom:1px solid #e8e8e8;box-sizing:border-box"></div>
<div style="position:absolute;top:400.70px;font-size:12px;line-height:13.80px;font-weight:400;color:#333;white-space:pre;left:205.20px;transform-origin:0 0;">Temaki</div>
<div style="position:absolute;left:347px;top:200.6px;width:475.5px;height:34.65px;background:#ffffff;border-bottom:1px solid #e8e8e8;box-sizing:border-box"></div>
<div style="position:absolute;top:212.40px;font-size:12px;line-height:13.80px;font-weight:400;color:#333;white-space:pre;left:349.80px;transform-origin:0 0;">Broto</div>
<div style="position:absolute;top:212.20px;font-size:12px;line-height:13.80px;font-weight:700;color:#222;white-space:pre;left:515.70px;transform-origin:0 0;transform:scaleX(0.9357);">P</div>
<div style="position:absolute;left:347px;top:235.25px;width:475.5px;height:34.65px;background:#e5e5e5;border-bottom:1px solid #e8e8e8;box-sizing:border-box"></div>
<div style="position:absolute;top:247.05px;font-size:12px;line-height:13.80px;font-weight:400;color:#333;white-space:pre;left:349.80px;transform-origin:0 0;">Grande</div>
<div style="position:absolute;top:246.85px;font-size:12px;line-height:13.80px;font-weight:700;color:#222;white-space:pre;left:515.70px;transform-origin:0 0;transform:scaleX(0.9097);">G</div>
<div style="position:absolute;left:347px;top:269.9px;width:475.5px;height:34.65px;background:#ffffff;border-bottom:1px solid #e8e8e8;box-sizing:border-box"></div>
<div style="position:absolute;top:281.70px;font-size:12px;line-height:13.80px;font-weight:400;color:#333;white-space:pre;left:349.80px;transform-origin:0 0;">Média</div>
<div style="position:absolute;top:281.50px;font-size:12px;line-height:13.80px;font-weight:700;color:#222;white-space:pre;left:515.70px;transform-origin:0 0;transform:scaleX(0.9500);">M</div>
<div style="position:absolute;left:201px;top:412px;width:622.5px;height:1px;background:#dcdcdc"></div>
<div style="position:absolute;left:553.3px;top:200px;width:1px;height:212px;background:#e4e4e4"></div>
<div style="position:absolute;left:202px;top:199.8px;width:620.5px;height:1px;background:#dedede"></div>
<svg style="position:absolute;left:304px;top:342px;" width="11" height="15" viewBox="0 0 11 15"><path d="M0.7 0.9V12.2L3.2 10L4.9 13.3L6.6 12.5L5.2 9.4H9.6Z" fill="#19aef0" stroke="#111" stroke-width="0.8" stroke-linejoin="round"/></svg>
<div style="position:absolute;left:191px;top:417.8px;width:642.5px;height:38.5px;background:#3e3e3e;border-radius:0 0 6px 6px"></div>
<div style="position:absolute;left:555px;top:180.3px;width:335.8px;height:225.5px;background:#f3f3f3;border:1px solid #d4d4d4;border-radius:6px;box-sizing:border-box;box-shadow:0 2px 10px rgba(0,0,0,0.16)"></div>
<div style="position:absolute;top:186.25px;font-size:9px;line-height:10.35px;font-weight:400;color:#222;white-space:pre;left:564.50px;transform-origin:0 0;transform:scaleX(0.8724);">Grande</div>
<svg style="position:absolute;left:871px;top:187px;" width="9" height="9" viewBox="0 0 9 9"><path d="M0.5 0.5L8.5 8.5M8.5 0.5L0.5 8.5" stroke="#444" stroke-width="0.9"/></svg>
<div style="position:absolute;left:564.8px;top:211px;width:316.7px;height:151.5px;background:#f0f0f0;border:1px solid #e0e0e0;border-radius:3px;box-sizing:border-box"></div>
<div style="position:absolute;top:229.55px;font-size:9px;line-height:10.35px;font-weight:400;color:#333;white-space:pre;left:600.60px;transform-origin:0 0;transform:scaleX(0.8726);">Descrição:</div>
<div style="position:absolute;left:643.2px;top:226.6px;width:211px;height:16.1px;background:#fff;border-radius:2px;box-shadow:0 0.6px 1px rgba(0,0,0,0.28)"></div>
<div style="position:absolute;top:229.65px;font-size:9px;line-height:10.35px;font-weight:400;color:#222;white-space:pre;left:645.60px;transform-origin:0 0;transform:scaleX(0.8824);">Grande</div>
<div style="position:absolute;top:245.05px;font-size:9px;line-height:10.35px;font-weight:400;color:#8a8a8a;white-space:pre;font-style:italic;left:656.40px;transform-origin:0 0;transform:scaleX(0.9015);">Exemplo: Grande, Médio, Pequeno...</div>
<div style="position:absolute;top:263.25px;font-size:9px;line-height:10.35px;font-weight:400;color:#333;white-space:pre;left:618.40px;transform-origin:0 0;transform:scaleX(0.8572);">Sigla:</div>
<div style="position:absolute;left:643.2px;top:261px;width:36.8px;height:15.4px;background:#fff;border-radius:2px;box-shadow:0 0.6px 1px rgba(0,0,0,0.28)"></div>
<div style="position:absolute;top:264.05px;font-size:9px;line-height:10.35px;font-weight:700;color:#222;white-space:pre;left:646.50px;transform-origin:0 0;transform:scaleX(0.9265);">G</div>
<div style="position:absolute;top:278.65px;font-size:9px;line-height:10.35px;font-weight:400;color:#8a8a8a;white-space:pre;font-style:italic;left:642.50px;transform-origin:0 0;transform:scaleX(0.8965);">Utilizado nas impressões: Fat ou Fatia, Peq ou Pequena ...</div>
<div style="position:absolute;top:296.05px;font-size:9px;line-height:10.35px;font-weight:400;color:#333;white-space:pre;left:609.00px;transform-origin:0 0;transform:scaleX(0.8699);">Tipo de:</div>
<div style="position:absolute;left:643.7px;top:293px;width:210.3px;height:16px;background:#f6f6f6;border:1px solid #e6e6e6;border-radius:2px;box-sizing:border-box"></div>
<div style="position:absolute;top:296.60px;font-size:8px;line-height:9.20px;font-weight:400;color:#cfcfcf;white-space:pre;left:647.00px;transform-origin:0 0;transform:scaleX(0.8179);">Pizza</div>
<svg style="position:absolute;left:843px;top:299px;" width="7" height="4" viewBox="0 0 7 4"><path d="M0.5 0.5L3.5 3.5L6.5 0.5" fill="none" stroke="#c8c8c8"/></svg>
<div style="position:absolute;left:577.2px;top:305px;width:298.4px;height:51.2px;border:2.8px solid #e53a3d;border-radius:4px;box-sizing:border-box;background:#f0f0f0"></div>
<svg style="position:absolute;left:589px;top:314.3px;" width="12" height="11.6" viewBox="0 0 12 11.6"><rect width="12" height="11.6" rx="2" fill="#1565c0"/><path d="M2.8 6L5 8.2L9.3 3.6" fill="none" stroke="#fff" stroke-width="1.2"/></svg>
<div style="position:absolute;top:315.65px;font-size:9px;line-height:10.35px;font-weight:400;color:#222;white-space:pre;left:603.80px;transform-origin:0 0;transform:scaleX(0.8730);">Permite personalizar &#x27;meio a meio&#x27; com vários sabores?</div>
<div style="position:absolute;top:335.85px;font-size:9px;line-height:10.35px;font-weight:400;color:#222;white-space:pre;left:652.00px;transform-origin:0 0;transform:scaleX(0.9021);">Qtd. máxima de sabores:</div>
<div style="position:absolute;left:748.7px;top:333.2px;width:36.5px;height:16px;background:#fff;border-radius:2px;border-bottom:1.5px solid #1f5fbf;box-sizing:border-box;box-shadow:0 0 0.8px rgba(0,0,0,0.3)"></div>
<div style="position:absolute;top:336.05px;font-size:9px;line-height:10.35px;font-weight:400;color:#222;white-space:pre;left:763.00px;transform-origin:0 0;transform:scaleX(0.8972);">2</div>
<div style="position:absolute;left:762.5px;top:336px;width:0.8px;height:9.5px;background:#111"></div>
<svg style="position:absolute;left:773.5px;top:335.5px;" width="7" height="11" viewBox="0 0 7 11"><path d="M0.8 3.8L3.5 1L6.2 3.8M0.8 7.2L3.5 10L6.2 7.2" fill="none" stroke="#333" stroke-width="0.9"/></svg>
<svg style="position:absolute;left:573px;top:372.5px;" width="15" height="18.5" viewBox="0 0 15 18.5"><g fill="none" stroke="#2d8cf0" stroke-width="1.4" stroke-linejoin="round"><path d="M0.7 3.2H14.3M5.2 3V1H9.8V3"/><path d="M1.9 3.2L2.3 17.5H12.7L13.1 3.2"/></g><path d="M5 6.2V14.8M7.5 6.2V14.8M10 6.2V14.8" stroke="#2d8cf0" stroke-width="1.5"/></svg>
<div style="position:absolute;top:377.05px;font-size:9px;line-height:10.35px;font-weight:700;color:#222;white-space:pre;left:599.80px;transform-origin:0 0;transform:scaleX(0.9195);">Excluir</div>
<svg style="position:absolute;left:751.5px;top:371.5px;" width="11.5" height="19" viewBox="0 0 11.5 19"><path d="M10.5 0.8L1.5 9.5L10.5 18.2" fill="none" stroke="#2d8cf0" stroke-width="1.6"/></svg>
<div style="position:absolute;top:377.05px;font-size:9px;line-height:10.35px;font-weight:700;color:#222;white-space:pre;left:777.20px;transform-origin:0 0;transform:scaleX(1.0465);">Voltar</div>
<svg style="position:absolute;left:819.5px;top:374.5px;" width="20.5" height="15" viewBox="0 0 20.5 15"><path d="M0.8 8L6.5 14L19.8 0.8" fill="none" stroke="#2d8cf0" stroke-width="1.6"/></svg>
<div style="position:absolute;top:377.05px;font-size:9px;line-height:10.35px;font-weight:700;color:#222;white-space:pre;left:848.00px;transform-origin:0 0;">Salvar</div>
</body></html>
